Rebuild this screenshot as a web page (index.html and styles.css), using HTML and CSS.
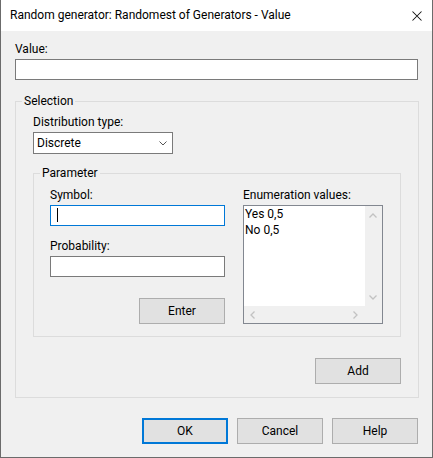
FILE: index.html
```html
<!DOCTYPE html>
<html>
<head>
<meta charset="utf-8">
<title>Random generator</title>
<link rel="stylesheet" href="styles.css">
</head>
<body>
<div class="window">
  <div class="titlebar">
    <span class="title">Random generator: Randomest of Generators - Value</span>
    <svg class="close" width="10" height="10" viewBox="0 0 10 10"><path d="M0.5 0.5 L9.5 9.5 M9.5 0.5 L0.5 9.5" stroke="#111" stroke-width="1.05" fill="none"/></svg>
  </div>
  <div class="client">
    <div class="lbl">Value:</div>
    <div class="textbox value-box"></div>

    <fieldset class="group selection">
      <legend class="legend sel-legend">Selection</legend>
      <div class="lbl">Distribution type:</div>
      <div class="combo">
        <span class="combo-text">Discrete</span>
        <svg class="chev" width="8" height="5" viewBox="0 0 8 5"><path d="M0.5 0.5 L4 4 L7.5 0.5" stroke="#555" stroke-width="1" fill="none"/></svg>
      </div>

      <fieldset class="group param">
        <legend class="legend param-legend">Parameter</legend>
        <div class="param-body">
          <div class="col-left">
            <div class="lbl">Symbol:</div>
            <div class="textbox focused"><span class="caret"></span></div>
            <div class="lbl lbl-gap">Probability:</div>
            <div class="textbox"></div>
            <button class="btn enter-btn">Enter</button>
          </div>
          <div class="col-right">
            <div class="lbl">Enumeration values:</div>
            <div class="listbox">
              <div class="list-items">
                <div class="item">Yes 0,5</div>
                <div class="item">No 0,5</div>
              </div>
              <div class="vscroll">
                <svg width="8" height="5" viewBox="0 0 8 5"><path d="M0.5 4.5 L4 1 L7.5 4.5" stroke="#c2c2c2" stroke-width="1.3" fill="none"/></svg>
                <svg width="8" height="5" viewBox="0 0 8 5"><path d="M0.5 0.5 L4 4 L7.5 0.5" stroke="#c2c2c2" stroke-width="1.3" fill="none"/></svg>
              </div>
              <div class="hscroll">
                <svg width="5" height="8" viewBox="0 0 5 8"><path d="M4.5 0.5 L1 4 L4.5 7.5" stroke="#c2c2c2" stroke-width="1.3" fill="none"/></svg>
                <svg width="5" height="8" viewBox="0 0 5 8"><path d="M0.5 0.5 L4 4 L0.5 7.5" stroke="#c2c2c2" stroke-width="1.3" fill="none"/></svg>
              </div>
              <div class="corner"></div>
            </div>
          </div>
        </div>
      </fieldset>

      <div class="add-row"><button class="btn">Add</button></div>
    </fieldset>

    <div class="dialog-buttons">
      <button class="btn default-btn">OK</button>
      <button class="btn">Cancel</button>
      <button class="btn">Help</button>
    </div>
  </div>
</div>
</body>
</html>
```
FILE: styles.css
```css
* { box-sizing: border-box; }
html, body { margin: 0; padding: 0; }
body {
  font-family: Roboto, "Noto Sans", sans-serif;
  font-size: 12px;
  color: #000;
  background: #fff;
}
.window {
  width: 433px;
  height: 458px;
  border: 1px solid #6b6b6b;
  border-top: none;
  background: #f0f0f0;
  display: flex;
  flex-direction: column;
}
.titlebar {
  height: 31px;
  flex: none;
  background: #fff;
  display: flex;
  align-items: center;
  justify-content: space-between;
  padding: 0 10px 0 9px;
}
.title { line-height: 15px; }
.close { display: block; }
.client {
  flex: 1;
  padding: 11px 14px 0 14px;
}
.lbl {
  line-height: 15px;
  margin-bottom: 2px;
}
.lbl-gap { margin-top: 13px; }
.textbox {
  height: 21px;
  background: #fff;
  border: 1px solid #7a7a7a;
}
.textbox.focused {
  border-color: #0078d7;
  padding: 2px 0 0 6px;
}
.caret {
  display: block;
  width: 1px;
  height: 14px;
  background: #000;
}
.group {
  margin: 0;
  border: 1px solid #dcdcdc;
  min-width: 0;
}
.legend {
  padding: 0 2px;
  line-height: 15px;
}
.selection {
  width: 404px;
  margin-top: 14px;
  padding: 6px 17px 13px 17px;
}
.sel-legend { margin-left: -11px; }
.combo {
  width: 140px;
  height: 22px;
  background: #fff;
  border: 1px solid #7a7a7a;
  display: flex;
  align-items: center;
  justify-content: space-between;
  padding: 0 5px 0 3px;
}
.combo-text { line-height: 15px; }
.chev { display: block; }
.param {
  width: 368px;
  margin-top: 12px;
  padding: 7px 16px 12px 16px;
}
.param-legend { margin-left: -10px; }
.param-body {
  display: flex;
  gap: 18px;
}
.col-left {
  width: 175px;
  display: flex;
  flex-direction: column;
}
.col-right { width: 140px; }
.btn {
  width: 86px;
  height: 26px;
  margin: 0;
  padding: 0;
  background: #e1e1e1;
  border: 1px solid #adadad;
  font-family: inherit;
  font-size: 12px;
  color: #000;
}
.enter-btn {
  margin-top: 21px;
  align-self: flex-end;
}
.listbox {
  height: 119px;
  border: 1px solid #828790;
  background: #fff;
  display: grid;
  grid-template-columns: 1fr 17px;
  grid-template-rows: 1fr 17px;
}
.list-items { padding: 0 1px; }
.item { line-height: 16px; }
.vscroll {
  background: #f0f0f0;
  display: flex;
  flex-direction: column;
  justify-content: space-between;
  align-items: center;
  padding: 7px 1px 6px 0;
}
.hscroll {
  background: #f0f0f0;
  display: flex;
  justify-content: space-between;
  align-items: center;
  padding: 0 7px 0 6px;
}
.vscroll svg, .hscroll svg { display: block; }
.corner { background: #f0f0f0; }
.add-row {
  margin-top: 21px;
  display: flex;
  justify-content: flex-end;
}
.dialog-buttons {
  margin-top: 20px;
  display: flex;
  justify-content: flex-end;
  gap: 9px;
}
.default-btn { border: 2px solid #0078d7; }
```
